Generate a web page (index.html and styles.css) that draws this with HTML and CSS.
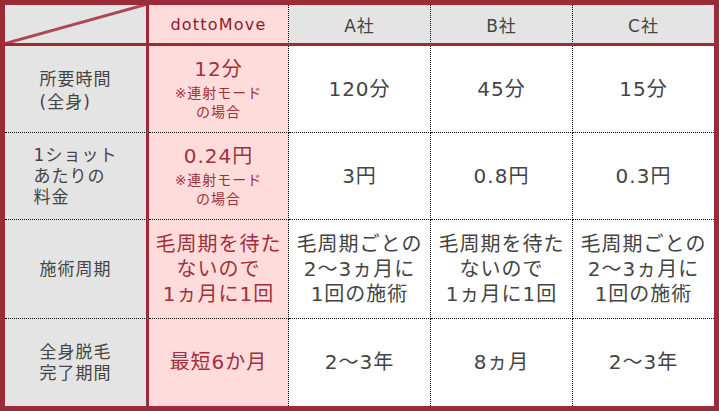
FILE: index.html
```html
<!DOCTYPE html>
<html lang="ja">
<head>
<meta charset="utf-8">
<title>比較表</title>
<link rel="stylesheet" href="styles.css">
</head>
<body>
<div class="cmp">
  <div class="cell corner lab hd"><svg class="diag" width="141" height="38" viewBox="0 0 141 38"><line x1="0" y1="38.5" x2="141" y2="-0.5" stroke="#ad4752" stroke-width="3"/></svg></div>
  <div class="cell hd dm dmhd">dottoMove</div>
  <div class="cell hd co">A社</div>
  <div class="cell hd co">B社</div>
  <div class="cell hd co last">C社</div>

  <div class="cell lab"><div class="lbl first">所要時間<br>(全身)</div></div>
  <div class="cell dm"><div><div class="big">12分</div><div class="note">※連射モード<br>の場合</div></div></div>
  <div class="cell val">120分</div>
  <div class="cell val">45分</div>
  <div class="cell val last">15分</div>

  <div class="cell lab"><div class="lbl">1ショット<br>あたりの<br>料金</div></div>
  <div class="cell dm"><div><div class="big">0.24円</div><div class="note">※連射モード<br>の場合</div></div></div>
  <div class="cell val">3円</div>
  <div class="cell val">0.8円</div>
  <div class="cell val last">0.3円</div>

  <div class="cell lab"><div class="lbl">施術周期</div></div>
  <div class="cell dm multi">毛周期を待た<br>ないので<br>1ヵ月に1回</div>
  <div class="cell val multi">毛周期ごとの<br>2〜3ヵ月に<br>1回の施術</div>
  <div class="cell val multi">毛周期を待た<br>ないので<br>1ヵ月に1回</div>
  <div class="cell val multi last">毛周期ごとの<br>2〜3ヵ月に<br>1回の施術</div>

  <div class="cell lab end"><div class="lbl">全身脱毛<br>完了期間</div></div>
  <div class="cell dm end val">最短6か月</div>
  <div class="cell val end">2〜3年</div>
  <div class="cell val end">8ヵ月</div>
  <div class="cell val end last">2〜3年</div>
</div>
</body>
</html>
```

FILE: styles.css
```css
body {
  margin: 0;
  background: #ffffff;
}

.cmp {
  width: 719px;
  height: 411px;
  box-sizing: border-box;
  border: 5px solid #9c2b37;
  display: grid;
  grid-template-columns: 144px 140px 142px 142px 141px;
  grid-template-rows: 41px 87px 87px 99px 87px;
  font-family: "DejaVu Sans", "Noto Sans CJK JP", sans-serif;
  color: #444444;
  background: #ffffff;
}

.cell {
  box-sizing: border-box;
  display: flex;
  align-items: center;
  justify-content: center;
  text-align: center;
  border-right: 1px dotted #000000;
  border-bottom: 1px dotted #000000;
}

.cell.last {
  border-right: none;
}

.cell.end {
  border-bottom: none;
}

.cell.hd {
  border-bottom: 3px solid #9c2b37;
}

.cell.lab {
  background: #e4e4e4;
  border-right: 3px solid #9c2b37;
  font-size: 17px;
  letter-spacing: 1px;
  line-height: 21px;
}

.corner {
  background: #ffffff;
  position: relative;
}

.diag {
  position: absolute;
  left: 0;
  top: 0;
}

.lbl {
  text-align: left;
}

.lbl.first {
  line-height: 23px;
  padding-top: 4px;
}

.co {
  background: #e4e4e4;
  font-size: 17px;
  letter-spacing: 1px;
  padding-top: 1px;
}

.dm {
  background: #ffdcdc;
  color: #a2303b;
}

.dmhd {
  color: #8e1b26;
  font-size: 16px;
  letter-spacing: 1.2px;
  padding-top: 1px;
}

.big {
  font-size: 20px;
  letter-spacing: 1px;
  line-height: 26px;
}

.note {
  font-size: 14px;
  letter-spacing: 1px;
  line-height: 19px;
  margin-top: 2px;
}

.val {
  font-size: 20px;
  letter-spacing: 1px;
  line-height: 25px;
}

.multi {
  font-size: 20px;
  letter-spacing: 1px;
  line-height: 25px;
}
```
